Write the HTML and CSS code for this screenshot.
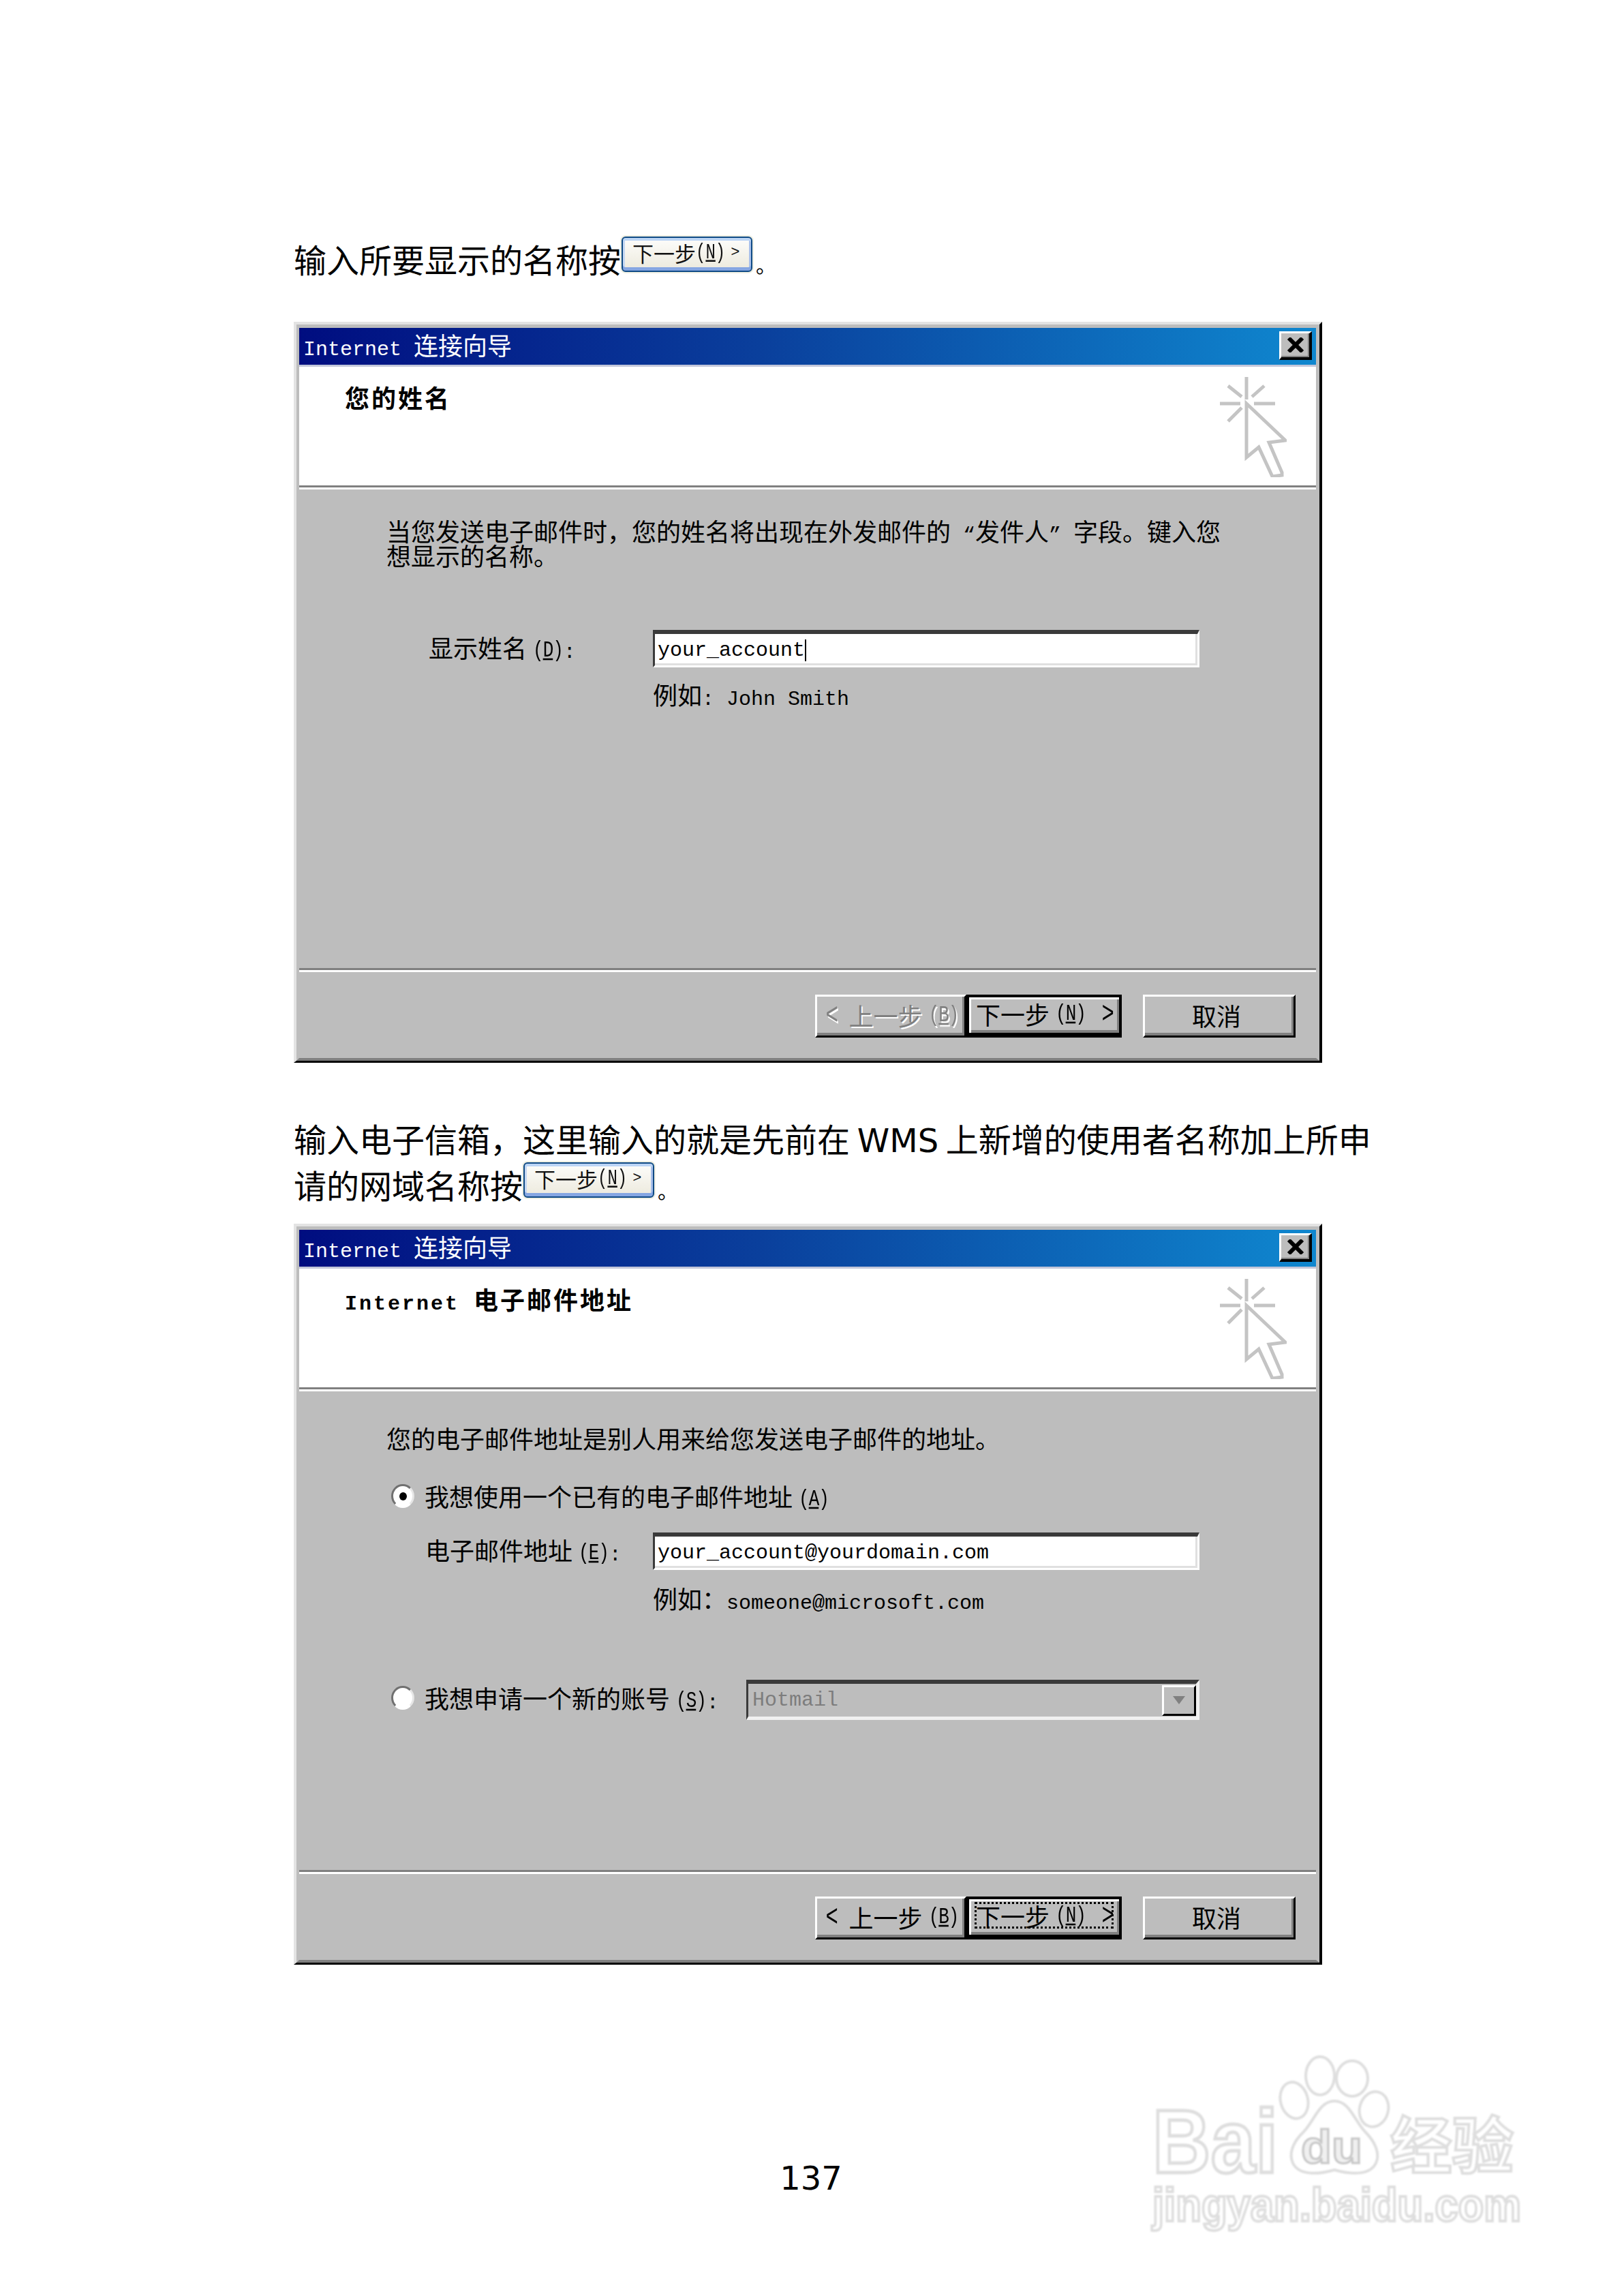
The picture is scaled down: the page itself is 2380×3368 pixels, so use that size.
FILE: index.html
```html
<!DOCTYPE html>
<html lang="zh-CN">
<head>
<meta charset="utf-8">
<title>137</title>
<link rel="stylesheet" href="styles.css">
</head>
<body>
<main class="page">
  <p class="para para-one">输入所要显示的名称按<span class="xp-btn">下一步<span class="xp-lat">(<u>N</u>)</span><span class="xp-arrow">&gt;</span></span><span class="stop">。</span></p>

  <section class="dialog dialog-one">
    <div class="frame">
      <header class="titlebar">
        <span class="title-text"><span class="lat">Internet </span>连接向导</span>
        <span class="close"><svg width="26" height="22" viewBox="0 0 26 22"><path class="close-x" d="M3 1 L23 21 M23 1 L3 21"/></svg></span>
      </header>
      <div class="banner">
        <h2 class="banner-title">您的姓名</h2>
        <svg class="cursor" width="99" height="147" viewBox="0 0 99 147"><path class="cursor-line" d="M40 0V33M1 39H31M51 39H82M13 13L33 29M66 13L48 29M13 65L33 45M40 39L97 93L73 96L92 140V144L78 146L58 103L40 118Z"/></svg>
      </div>
      <div class="content content-one">
        <p class="lead">当您发送电子邮件时，您的姓名将出现在外发邮件的<span class="lat"> “</span>发件人<span class="lat">” </span>字段。键入您<br>想显示的名称。</p>
        <div class="field field-name">
          <label class="field-label label-name">显示姓名<span class="mn">(<u>D</u>)</span><span class="lat">:</span></label>
          <div class="input"><span class="lat">your_account</span><span class="caret"></span></div>
        </div>
        <p class="example example-name">例如<span class="lat">: John Smith</span></p>
      </div>
      <div class="separator"></div>
      <footer class="actions">
        <span class="btn btn-back is-disabled"><span class="chev chev-back">&lt;</span>上一步<span class="mn">(<u>B</u>)</span></span>
        <span class="btn btn-next"><span class="btn-inner">下一步<span class="mn">(<u>N</u>)</span><span class="chev chev-next">&gt;</span></span></span>
        <span class="btn btn-cancel">取消</span>
      </footer>
    </div>
  </section>

  <p class="para para-two">输入电子信箱，这里输入的就是先前在 <span class="verdana">WMS</span> 上新增的使用者名称加上所申<br>请的网域名称按<span class="xp-btn">下一步<span class="xp-lat">(<u>N</u>)</span><span class="xp-arrow">&gt;</span></span><span class="stop">。</span></p>

  <section class="dialog">
    <div class="frame">
      <header class="titlebar">
        <span class="title-text"><span class="lat">Internet </span>连接向导</span>
        <span class="close"><svg width="26" height="22" viewBox="0 0 26 22"><path class="close-x" d="M3 1 L23 21 M23 1 L3 21"/></svg></span>
      </header>
      <div class="banner">
        <h2 class="banner-title"><span class="lat lat-bold">Internet </span>电子邮件地址</h2>
        <svg class="cursor" width="99" height="147" viewBox="0 0 99 147"><path class="cursor-line" d="M40 0V33M1 39H31M51 39H82M13 13L33 29M66 13L48 29M13 65L33 45M40 39L97 93L73 96L92 140V144L78 146L58 103L40 118Z"/></svg>
      </div>
      <div class="content content-two">
        <p class="lead">您的电子邮件地址是别人用来给您发送电子邮件的地址。</p>
        <div class="radio-row radio-first">
          <span class="radio is-checked"></span>
          <span class="radio-label">我想使用一个已有的电子邮件地址<span class="mn">(<u>A</u>)</span></span>
        </div>
        <div class="field field-mail">
          <label class="field-label label-mail">电子邮件地址<span class="mn">(<u>E</u>)</span><span class="lat">:</span></label>
          <div class="input"><span class="lat">your_account@yourdomain.com</span></div>
        </div>
        <p class="example example-mail">例如：<span class="lat">someone@microsoft.com</span></p>
        <div class="radio-row radio-second">
          <span class="radio"></span>
          <span class="radio-label radio-label-wide">我想申请一个新的账号<span class="mn">(<u>S</u>)</span><span class="lat">:</span></span>
          <div class="select">
            <span class="lat select-value">Hotmail</span>
            <span class="select-btn"><svg width="22" height="14" viewBox="0 0 22 14"><path class="select-arrow" d="M2 1H20L11 13Z"/></svg></span>
          </div>
        </div>
      </div>
      <div class="separator"></div>
      <footer class="actions">
        <span class="btn btn-back"><span class="chev chev-back">&lt;</span>上一步<span class="mn">(<u>B</u>)</span></span>
        <span class="btn btn-next"><span class="btn-inner has-focus">下一步<span class="mn">(<u>N</u>)</span><span class="chev chev-next">&gt;</span></span></span>
        <span class="btn btn-cancel">取消</span>
      </footer>
    </div>
  </section>

  <p class="page-number">137</p>

  <svg class="watermark" width="541" height="258" viewBox="0 0 541 258">
    <text class="wm-text wm-latin wm-bai" x="0" y="172" font-size="132" textLength="184" lengthAdjust="spacingAndGlyphs">Bai</text>
    <ellipse class="wm-shape" cx="208" cy="66" rx="20" ry="27" transform="rotate(-15 208 66)"/>
    <ellipse class="wm-shape" cx="246" cy="30" rx="21" ry="28"/>
    <ellipse class="wm-shape" cx="293" cy="34" rx="23" ry="26"/>
    <ellipse class="wm-shape" cx="325" cy="79" rx="21" ry="26" transform="rotate(15 325 79)"/>
    <path class="wm-shape" d="M267 67C245 67 238 95 222 112C205 128 200 145 206 158C214 175 240 176 267 168C295 176 320 175 328 158C334 145 328 128 312 112C296 95 289 67 267 67Z"/>
    <text class="wm-text wm-latin wm-du" x="218" y="158" font-size="68" textLength="90" lengthAdjust="spacingAndGlyphs">du</text>
    <text class="wm-text wm-cjk" x="349" y="165" font-size="90" textLength="181" lengthAdjust="spacingAndGlyphs">经验</text>
    <text class="wm-text wm-latin" x="0" y="243" font-size="68" textLength="541" lengthAdjust="spacingAndGlyphs">jingyan.baidu.com</text>
  </svg>
</main>
</body>
</html>
```

FILE: styles.css
```css
* { box-sizing: border-box; }
html, body { margin: 0; padding: 0; background: #fff; }

.page {
  position: relative;
  width: 2380px;
  height: 3368px;
  padding: 345px 0 0 431px;
  overflow: hidden;
  color: #000;
  font-family: "Noto Sans CJK SC", "Noto Sans", sans-serif;
}

.para {
  margin: 0;
  height: 68px;
  font-size: 48px;
  line-height: 68px;
  white-space: nowrap;
}
.para-one { margin-bottom: 59px; }
.para-two { height: 136px; margin-top: 76px; }
.verdana { font-family: "DejaVu Sans", sans-serif; line-height: 0; }
.stop { margin-left: 4px; font-size: 30px; line-height: 0; }

.xp-btn {
  display: inline-flex;
  align-items: center;
  width: 194px;
  height: 54px;
  margin: -30px 0;
  padding: 0 0 3px 14px;
  vertical-align: 16px;
  border: 3px solid #0f4a85;
  border-radius: 7px;
  outline: 2px solid #efefe2;
  outline-offset: -1px;
  background: linear-gradient(#fdfdfb, #ece9dc);
  box-shadow: inset 0 4px 0 #bcd5f5, inset 0 -5px 0 #86a6e2, inset 3px 0 0 #c6d8f2, inset -3px 0 0 #a9c0ea;
  font-size: 31px;
  line-height: 36px;
  color: #111;
}
.xp-lat { font: 24px/1 "Liberation Mono", monospace; transform: scaleY(1.3); }
.xp-arrow { margin-left: 8px; font: 22px/1 "Liberation Mono", monospace; }

.dialog {
  display: flex;
  width: 1509px;
  height: 1087px;
  border-style: solid;
  border-width: 4px 4px 3px 4px;
  border-color: #e3e3e3 #000 #000 #e3e3e3;
  background: #bdbdbd;
  font-size: 36px;
  line-height: 36px;
}
.para-two + .dialog { margin-top: 24px; }

.frame {
  display: flex;
  flex: 1;
  flex-direction: column;
  border-style: solid;
  border-width: 5px 5px 4px 4px;
  border-color: #bdbdbd #bdbdbd #808080 #bdbdbd;
}

.lat { font-family: "Liberation Mono", monospace; font-size: 30px; line-height: 0; white-space: pre; }
.lat-bold { font-weight: 700; letter-spacing: 3px; }
.mn {
  display: inline-block;
  margin: 0 1px 0 9px;
  font-family: "Liberation Mono", monospace;
  font-size: 26px;
  line-height: 0;
  letter-spacing: -1px;
  vertical-align: 4px;
  white-space: pre;
  transform: scaleY(1.3);
}

.titlebar {
  display: flex;
  flex: none;
  align-items: center;
  justify-content: space-between;
  height: 57px;
  padding: 0 6px 3px 6px;
  border-bottom: 3px solid #c3c7da;
  background: linear-gradient(90deg, #000d80 0%, #0a3f9c 45%, #0f87cf 100%);
  color: #fff;
}
.title-text { margin-top: -4px; }
.close {
  display: flex;
  align-items: center;
  justify-content: center;
  width: 48px;
  height: 42px;
  border-style: solid;
  border-width: 3px 4px 4px 3px;
  border-color: #fff #000 #000 #fff;
  background: #bdbdbd;
  box-shadow: inset -2px -2px 0 #808080;
}
.close-x { fill: none; stroke: #000; stroke-width: 6; }

.banner {
  position: relative;
  display: flex;
  flex: none;
  justify-content: space-between;
  height: 180px;
  padding: 26px 43px 0 67px;
  border-bottom: 3px solid #fff;
  background: #fff;
  box-shadow: inset 0 -3px 0 #808080;
}
.banner-title { margin: 0; font-size: 36px; line-height: 36px; font-weight: 700; letter-spacing: 3px; white-space: nowrap; }
.cursor { flex: none; margin-top: -11px; }
.cursor-line { fill: none; stroke: #c4c4c4; stroke-width: 5; }

.content { flex: 1; padding-left: 128px; }
.content-one { padding-top: 42px; }
.content-two { padding-top: 50px; }

.lead { margin: 0; white-space: nowrap; }

.field { display: flex; align-items: center; }
.field-name { margin: 92px 0 0 62px; }
.field-mail { margin: 36px 0 0 57px; }
.field-label { flex: none; margin-top: -6px; white-space: nowrap; }
.label-name { width: 329px; }
.label-mail { width: 334px; }

.input {
  display: flex;
  align-items: center;
  width: 802px;
  height: 55px;
  padding: 2px 0 0 4px;
  border-style: solid;
  border-width: 6px 3px 3px 3px;
  border-color: #3a3a3a #fff #fff #3a3a3a;
  background: #fff;
  box-shadow: inset 0 -3px 0 #e0e0e0, inset -3px 0 0 #e0e0e0;
}
.caret { width: 2px; height: 32px; background: #000; }

.example { margin: 0; white-space: nowrap; }
.example-name { margin: 21px 0 0 391px; }
.example-mail { margin: 23px 0 0 391px; }

.radio-row { display: flex; align-items: center; margin-left: 7px; white-space: nowrap; }
.radio-first { margin-top: 50px; }
.radio-second { margin-top: 102px; }
.radio {
  display: flex;
  flex: none;
  align-items: center;
  justify-content: center;
  width: 34px;
  height: 35px;
  margin-right: 15px;
  border-style: solid;
  border-width: 3px;
  border-color: #707070 #e6e6e6 #fff #707070;
  border-radius: 50%;
  background: #fff;
}
.radio.is-checked::after {
  content: "";
  width: 11px;
  height: 12px;
  border-radius: 50%;
  background: #000;
}
.radio-label { margin-top: -2px; }
.radio-label-wide { width: 472px; }
.radio-second .radio { margin-top: -6px; }
.radio-second .radio-label { margin-top: -8px; }

.select {
  display: flex;
  align-items: center;
  justify-content: space-between;
  width: 665px;
  height: 59px;
  padding-left: 6px;
  border-style: solid;
  border-width: 6px 5px 5px 3px;
  border-color: #3a3a3a #f0f0f0 #f0f0f0 #3a3a3a;
  background: #bdbdbd;
}
.select-value { color: #7d7d7d; }
.select-btn {
  display: flex;
  align-items: center;
  justify-content: center;
  width: 50px;
  height: 45px;
  border-style: solid;
  border-width: 3px;
  border-color: #fff #000 #000 #fff;
  background: #bdbdbd;
}
.select-arrow { fill: #808080; }

.separator { flex: none; height: 6px; border-top: 3px solid #808080; border-bottom: 3px solid #fff; }

.actions {
  display: flex;
  flex: none;
  justify-content: flex-end;
  height: 126px;
  padding: 33px 30px 0 0;
}
.btn {
  display: flex;
  align-items: center;
  justify-content: center;
  height: 63px;
  border-style: solid;
  border-width: 3px;
  border-color: #fff #000 #000 #fff;
  box-shadow: inset -3px -4px 0 #808080;
  white-space: nowrap;
}
.btn-back { width: 222px; padding: 0 0 3px 0; justify-content: flex-start; padding-left: 11px; }
.btn-next {
  width: 228px;
  padding: 0 4px 5px;
  margin-right: 31px;
  border: 4px solid #000;
  border-bottom-width: 7px;
  box-shadow: inset 3px 3px 0 #fff, inset -3px -4px 0 #808080;
}
.btn-cancel { width: 224px; padding: 0 8px 3px 0; }
.btn-inner { display: flex; align-items: center; width: 100%; height: 100%; padding-left: 6px; white-space: nowrap; }
.btn-inner.has-focus { outline: 3px dotted #000; outline-offset: -7px; }
.chev { display: inline-block; margin-top: 4px; font: 36px/1 "Liberation Mono", monospace; transform: scale(0.85, 1.25); }
.chev-back { margin-right: 14px; }
.chev-next { margin-left: 21px; }
.is-disabled { color: #808080; text-shadow: 2px 2px 0 #fff; }

.page-number {
  margin: 279px 0 0 -431px;
  width: 2380px;
  text-align: center;
  font-family: "DejaVu Sans", sans-serif;
  font-size: 48px;
  line-height: 68px;
}

.watermark { position: absolute; left: 1691px; top: 3015px; overflow: visible; filter: blur(1px); }
.wm-shape { fill: #fff; stroke: #dedede; stroke-width: 4; }
.wm-text { fill: #fff; stroke: #dedede; stroke-width: 4; font-weight: 700; }
.wm-latin { font-family: "Liberation Sans", sans-serif; }
.wm-cjk { font-family: "Noto Sans CJK SC", sans-serif; }
.wm-bai { stroke-width: 5; }
.wm-du { fill: #f0f0f0; stroke: #c8c8c8; stroke-width: 3; }
```
